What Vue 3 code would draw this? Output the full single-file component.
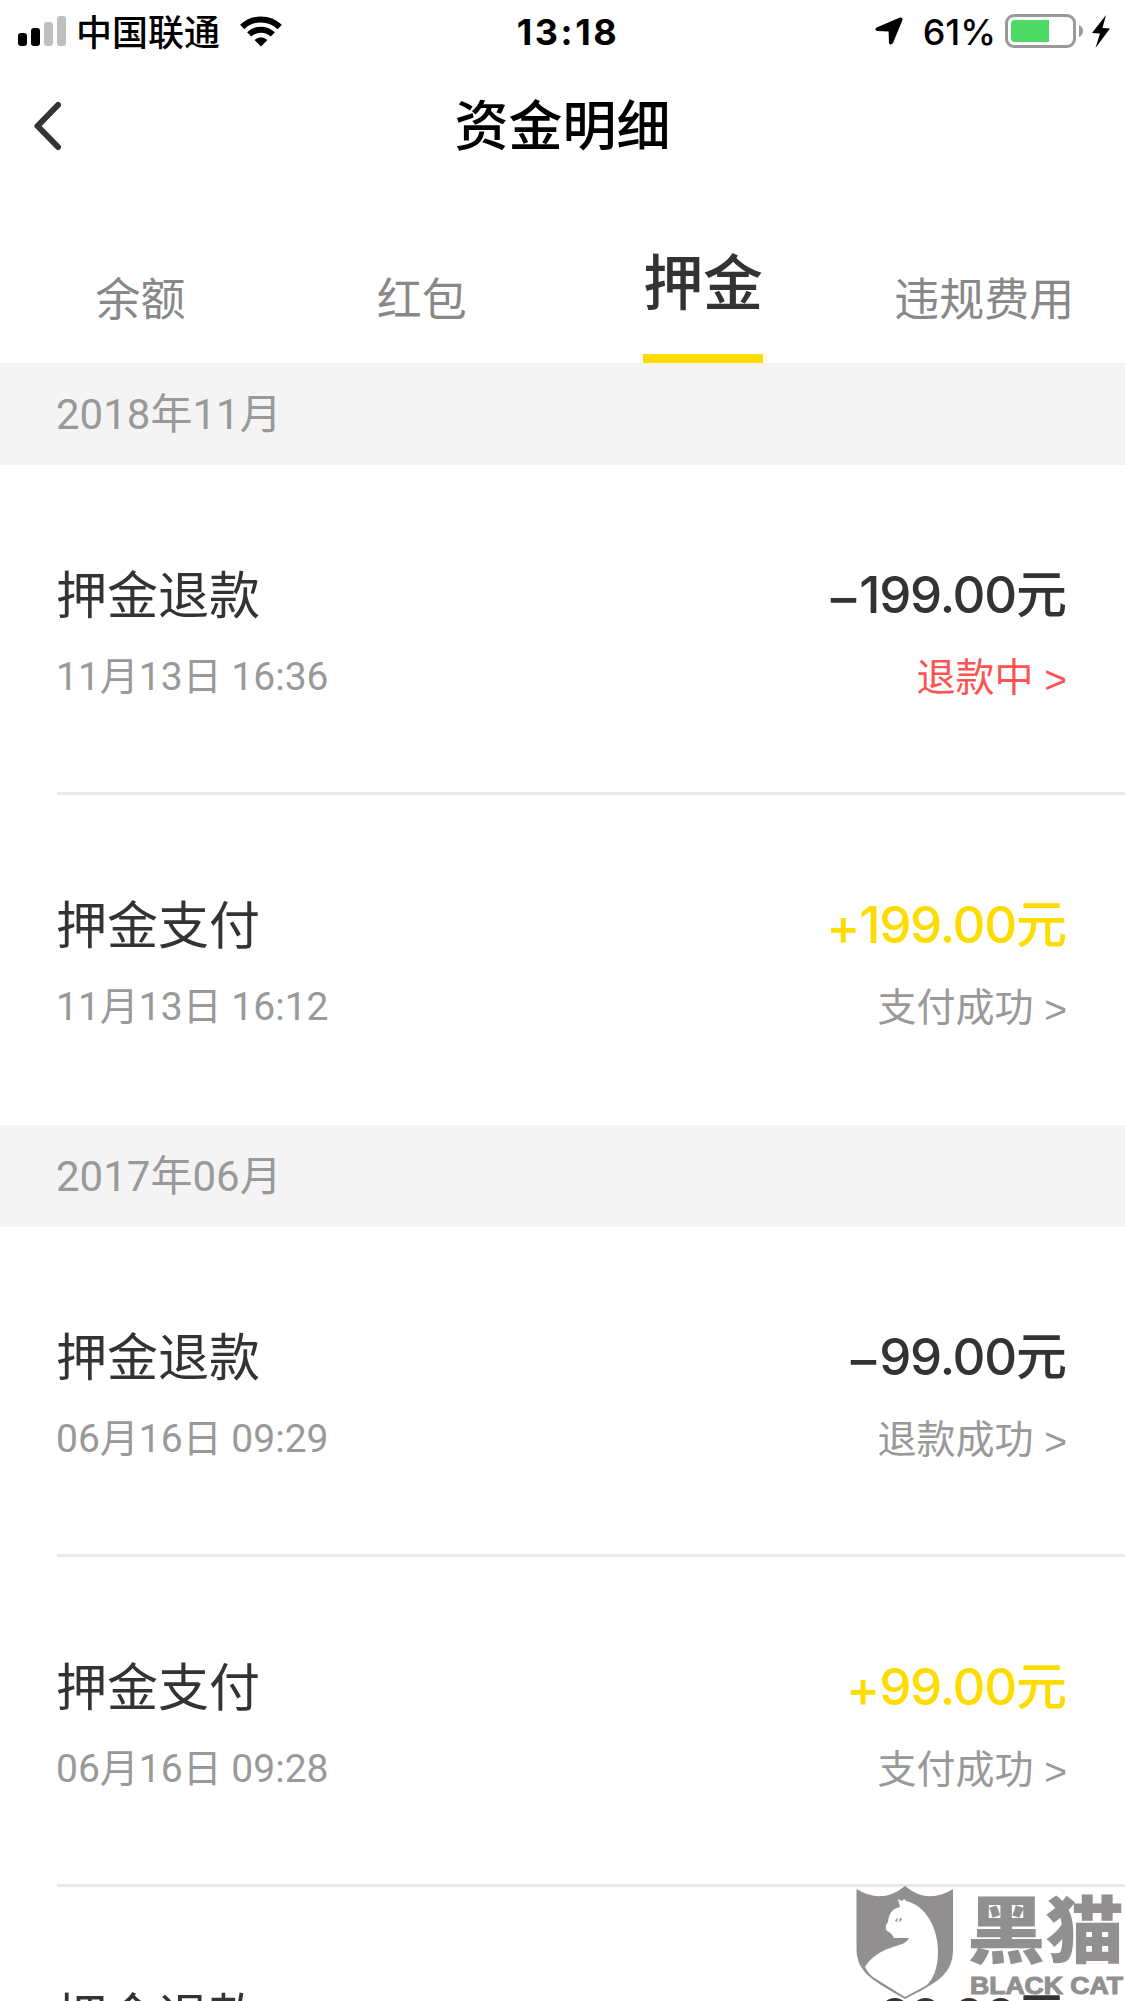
<script setup>

import { ref } from "vue";

const tabs = ['余额', '红包', '押金', '违规费用']
const activeTab = ref(2)

const battery = ref(61)

const groups = ref([
  {
    month: '2018年11月',
    records: [
      { title: '押金退款', time: '11月13日 16:36', sign: '–', amount: '199.00', status: '退款中', pending: true },
      { title: '押金支付', time: '11月13日 16:12', sign: '+', amount: '199.00', status: '支付成功' },
    ]
  },
  {
    month: '2017年06月',
    records: [
      { title: '押金退款', time: '06月16日 09:29', sign: '–', amount: '99.00', status: '退款成功' },
      { title: '押金支付', time: '06月16日 09:28', sign: '+', amount: '99.00', status: '支付成功' },
      { title: '押金退款', sign: '–', amount: '99.00' },
    ]
  }
])

const isIncome = (record) => record.sign === '+'

</script>

<template>
  <div class="page">
    <div class="status-bar">
      <div class="status-left">
        <svg class="signal" width="48" height="30" viewBox="0 0 48 30">
          <rect x="0" y="17" width="9" height="13" rx="3" />
          <rect x="13" y="12" width="9" height="18" rx="3" />
          <rect x="26" y="6" width="9" height="24" rx="3" fill="#bfbfbf" />
          <rect x="39" y="0" width="9" height="30" rx="3" fill="#bfbfbf" />
        </svg>
        <span class="carrier">中国联通</span>
        <svg class="wifi" width="42" height="31" viewBox="0 0 42 31">
          <path d="M2.2 11 A27 27 0 0 1 39.8 11" fill="none" stroke="#000" stroke-width="6" />
          <path d="M9.2 18.4 A17 17 0 0 1 32.8 18.4" fill="none" stroke="#000" stroke-width="6" />
          <path d="M14.5 24 Q21 18.5 27.5 24 L21 30.5 Z" />
        </svg>
      </div>
      <div class="clock">13:18</div>
      <div class="status-right">
        <svg class="location" width="28" height="28" viewBox="0 0 28 28">
          <path d="M1.5 10.5 L25 0.5 Q28 0 27.5 3 L18 26 Q16 28.5 14 26.5 L13.6 14.4 L2 14 Q-1 12.5 1.5 10.5 Z" />
        </svg>
        <span class="percent">{{ battery }}%</span>
        <div class="battery">
          <div class="battery-level" :style="{ width: `${battery}%` }"></div>
        </div>
        <svg class="battery-cap" width="4" height="12" viewBox="0 0 4 12">
          <path d="M0 0 Q4 2 4 6 Q4 10 0 12 Z" fill="#999" />
        </svg>
        <svg class="bolt" width="18" height="33" viewBox="0 0 18 33">
          <path d="M14 0 L0 18 L8 18.5 L3.5 33 L18 13.5 L10.5 13 Z" />
        </svg>
      </div>
    </div>

    <div class="nav">
      <svg class="back" width="30" height="54" viewBox="0 0 30 54">
        <path d="M24 6 L3.5 27 L24 48" fill="none" stroke="#333" stroke-width="6" stroke-linecap="round" stroke-linejoin="round" />
      </svg>
      <h1>资金明细</h1>
    </div>

    <div class="tabs">
      <div
        class="tab"
        v-for="(tab, i) in tabs"
        :key="tab"
        :class="{ active: i === activeTab }"
        @click="activeTab = i"
      >
        <span>{{ tab }}</span>
      </div>
    </div>

    <div v-for="group in groups" :key="group.month">
      <div class="month">{{ group.month }}</div>
      <div class="record" v-for="(record, i) in group.records" :key="i">
        <div class="row">
          <span class="title">{{ record.title }}</span>
          <span class="amount" :class="{ income: isIncome(record) }"><span class="sign">{{ record.sign }}</span><span class="number">{{ record.amount }}</span>元</span>
        </div>
        <div class="row sub" v-if="record.time">
          <span class="time">{{ record.time }}</span>
          <span class="state" :class="{ pending: record.pending }">{{ record.status }} <span class="arrow">&gt;</span></span>
        </div>
      </div>
    </div>

    <!-- watermark over the list -->
    <svg class="watermark" width="269" height="116" viewBox="0 0 269 116">
      <path d="M0.5 4 Q26 20 49 1 Q72 20 97 4 V64 C97 90 80 98 49 114 C18 96 0.5 88 0.5 64 Z" fill="#918f90" />
      <path d="M9 82 C19 66 35 63 46 59 Q51 57 53 53 L38 53 Q36 48 31 46 Q28 41 32 37 Q33 24 44 22 L42 14 L46 16 L48 14 L50 16 C70 20 82 44 82 66 C82 84 77 94 71 100 L49 112 L20 94 Q13 90 9 82 Z" fill="#fff" />
      <path d="M39 36 Q42 30 46 34 Q44 39 39 36 Z" fill="#918f90" />
      <path d="M43 32 L42 37" stroke="#fff" stroke-width="2" />
      <text class="mark-cn" x="111" y="72" textLength="157" lengthAdjust="spacingAndGlyphs">黑猫</text>
      <text class="mark-en" x="114" y="108.5" textLength="153" lengthAdjust="spacingAndGlyphs">BLACK CAT</text>
    </svg>
  </div>
</template>


<style>
body {
  margin: 0;
  background: #fff;
}
</style>

<style scoped>

.page {
  position: relative;
  width: 1125px;
  height: 2001px;
  overflow: hidden;
  background: #fff;
  color: #333;
  font-family: Roboto, "Noto Sans CJK SC", sans-serif;
}

.status-bar {
  display: grid;
  grid-template-columns: 1fr auto 1fr;
  align-items: center;
  height: 60px;
  padding: 0 15px 0 18px;
  color: #000;
  font-family: Inter, "Noto Sans CJK SC", sans-serif;
  font-size: 36px;
}

.status-left,
.status-right {
  display: flex;
  align-items: center;
}

.status-right {
  justify-content: flex-end;
}

.carrier {
  margin-left: 10px;
  padding-bottom: 2px;
  font-family: "Noto Sans CJK SC", sans-serif;
  font-weight: 500;
  line-height: 60px;
}

.wifi {
  margin-left: 20px;
}

.clock {
  padding: 1px 0 0 8px;
  font-weight: 700;
  letter-spacing: 2.6px;
  line-height: 60px;
}

.percent {
  margin-left: 20px;
  padding-top: 1px;
  font-weight: 500;
  line-height: 60px;
}

.battery {
  box-sizing: border-box;
  width: 71px;
  height: 34px;
  margin-left: 9px;
  padding: 3px 0 3px 3px;
  border: 3px solid #999;
  border-radius: 9px;
}

.battery-level {
  height: 100%;
  border-radius: 4px 0 0 4px;
  background: #4cd964;
}

.battery-cap {
  margin-left: 3px;
}

.bolt {
  margin-left: 9px;
}

.nav {
  display: grid;
  grid-template-columns: 1fr auto 1fr;
  align-items: center;
  height: 132px;
}

.back {
  margin-left: 34px;
}

h1 {
  margin: 0;
  padding-bottom: 6px;
  color: #000;
  font-family: "Noto Sans CJK SC", sans-serif;
  font-size: 54px;
  font-weight: 500;
  line-height: 60px;
}

.tabs {
  display: grid;
  grid-template-columns: repeat(4, 1fr);
  height: 171px;
}

.tab {
  display: flex;
  align-items: flex-end;
  justify-content: center;
}

.tab span {
  padding-bottom: 32px;
  color: #888;
  font-size: 45px;
  line-height: 60px;
}

.tab.active span {
  padding-bottom: 33px;
  border-bottom: 9px solid #ffdc00;
  color: #333;
  font-size: 60px;
  font-weight: 500;
  line-height: 72px;
}

.month {
  box-sizing: border-box;
  height: 102px;
  padding: 1px 0 0 56px;
  background: #f4f4f4;
  color: #999;
  font-size: 42px;
  line-height: 102px;
}

.record {
  box-sizing: border-box;
  height: 330px;
  margin-left: 57px;
  padding: 98px 58px 0 0;
  border-bottom: 3px solid #e9e9e9;
}

.record:last-child {
  border-bottom: none;
}

.row {
  display: flex;
  justify-content: space-between;
}

.title {
  margin-left: -1px;
  padding-top: 2px;
  font-size: 51px;
  line-height: 64px;
}

.amount {
  font-family: Inter, "Noto Sans CJK SC", sans-serif;
  font-size: 51px;
  font-weight: 500;
  line-height: 64px;
}

.number {
  letter-spacing: -1.2px;
}

.sign {
  margin-right: 3px;
  line-height: 1;
  vertical-align: -3px;
}

.income {
  color: #ffdc00;
}

.income .sign {
  margin-right: -1px;
  vertical-align: -2px;
}

.sub {
  margin-top: 18px;
  color: #999;
  font-size: 39px;
  line-height: 60px;
}

.time {
  margin-left: -1px;
}

.state {
  padding-top: 1px;
  font-family: "Liberation Sans", "Noto Sans CJK SC", sans-serif;
}

.arrow {
  line-height: 1;
  vertical-align: -2px;
}

.pending {
  color: #ff5353;
}

.watermark {
  position: absolute;
  left: 856px;
  top: 1885px;
}

.mark-cn {
  fill: #918f90;
  font-family: "Noto Sans CJK SC", sans-serif;
  font-size: 73px;
  font-weight: 900;
}

.mark-en {
  fill: #918f90;
  stroke: #918f90;
  stroke-width: 1;
  font-family: "Liberation Sans", sans-serif;
  font-size: 23px;
  font-weight: 700;
}

</style>
